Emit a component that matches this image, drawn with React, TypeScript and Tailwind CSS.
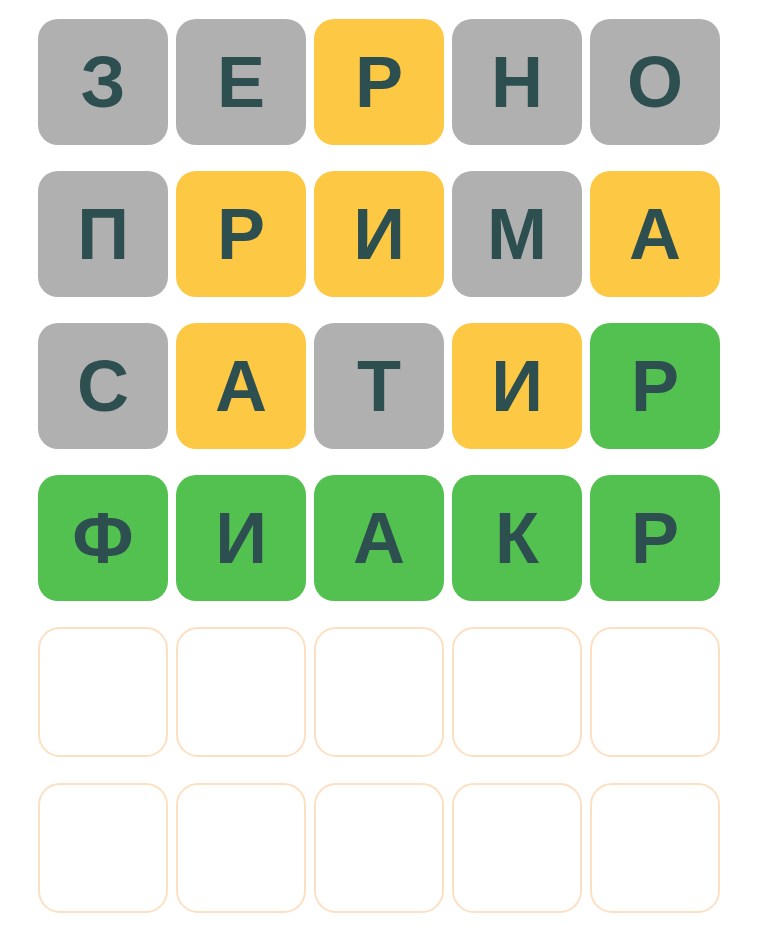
const rows: { ch: string; s: "g" | "y" | "c" }[][] = [
  [
    { ch: "З", s: "g" },
    { ch: "Е", s: "g" },
    { ch: "Р", s: "y" },
    { ch: "Н", s: "g" },
    { ch: "О", s: "g" },
  ],
  [
    { ch: "П", s: "g" },
    { ch: "Р", s: "y" },
    { ch: "И", s: "y" },
    { ch: "М", s: "g" },
    { ch: "А", s: "y" },
  ],
  [
    { ch: "С", s: "g" },
    { ch: "А", s: "y" },
    { ch: "Т", s: "g" },
    { ch: "И", s: "y" },
    { ch: "Р", s: "c" },
  ],
  [
    { ch: "Ф", s: "c" },
    { ch: "И", s: "c" },
    { ch: "А", s: "c" },
    { ch: "К", s: "c" },
    { ch: "Р", s: "c" },
  ],
];

const bg = {
  g: "bg-[#b0b0b0]",
  y: "bg-[#fdc844]",
  c: "bg-[#52c150]",
};

export default function App() {
  return (
    <div
      className="min-h-screen bg-white pt-[19px] pl-[38px]"
      style={{ fontFamily: '"Liberation Sans", Arial, sans-serif' }}
    >
      <div className="flex flex-col gap-[26px] w-[682px]">
        {rows.map((row, i) => (
          <div key={i} className="grid grid-cols-5 gap-2">
            {row.map((t, j) => (
              <div
                key={j}
                className={`h-[126px] rounded-[20px] flex items-center justify-center text-[72px] font-bold text-[#2e4f4f] ${bg[t.s]}`}
              >
                {t.ch}
              </div>
            ))}
          </div>
        ))}
        {[0, 1].map((i) => (
          <div key={"e" + i} className="grid grid-cols-5 gap-2">
            {[0, 1, 2, 3, 4].map((j) => (
              <div
                key={j}
                className="h-[130px] rounded-[22px] border-2 border-[#fde0c2] bg-white"
              />
            ))}
          </div>
        ))}
      </div>
    </div>
  );
}
